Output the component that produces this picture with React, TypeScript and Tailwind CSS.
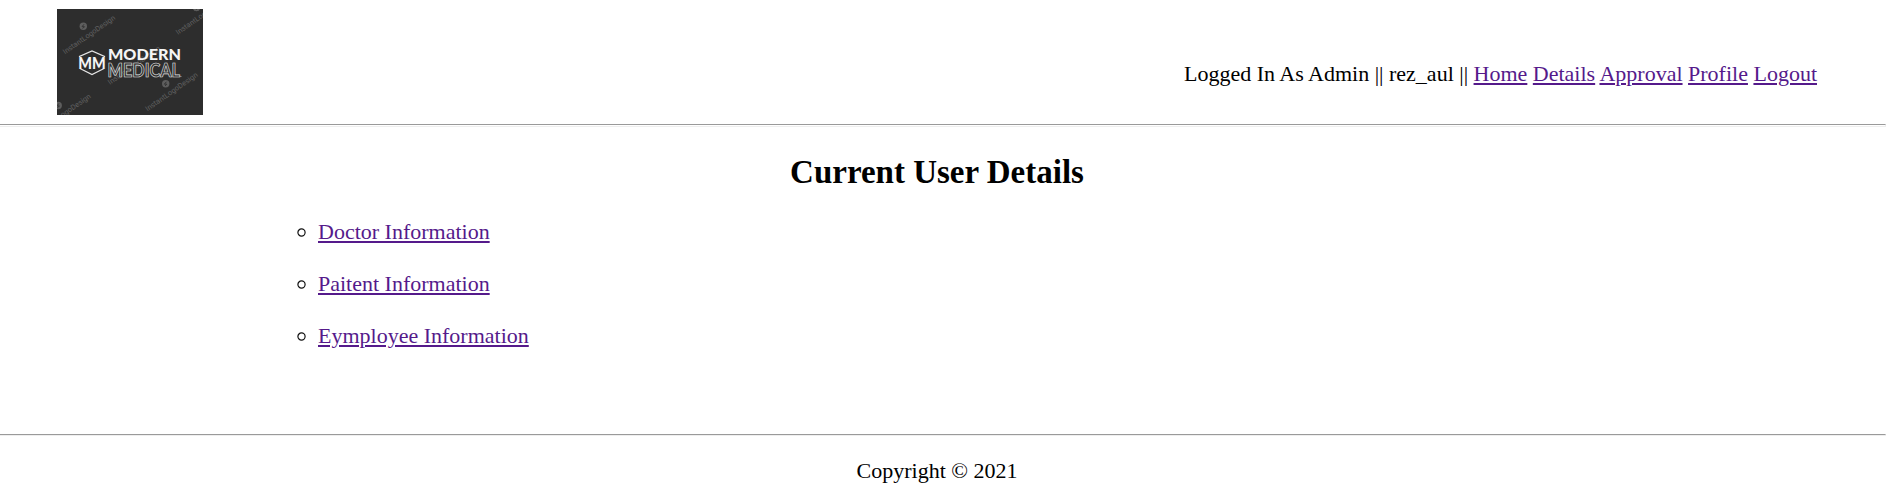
const link = "text-[#551a8b] underline underline-offset-[2px] decoration-2";

function Mark({ x, y }: { x: number; y: number }) {
  return (
    <g transform={`translate(${x} ${y})`}>
      <circle r="3.7" fill="#5e5e5e" />
      <path d="M.7-2-1.3.4H1.2L-.6 2.2" fill="none" stroke="#333" strokeWidth="1" />
    </g>
  );
}

function Watermark({ x, y }: { x: number; y: number }) {
  return (
    <text transform={`translate(${x} ${y}) rotate(-35)`} fontSize="7.4" fontFamily="Roboto, sans-serif" textLength="62" fill="#606060">
      InstantLogoDesign
    </text>
  );
}

function Logo() {
  return (
    <svg width="146" height="106" viewBox="0 0 146 106" className="block shrink-0" fontFamily="Lato, sans-serif">
      <rect width="146" height="106" fill="#2d2d2d" />
      <Watermark x={8} y={45.5} />
      <Watermark x={121} y={26} />
      <Watermark x={53} y={76} />
      <Watermark x={90.5} y={102.5} />
      <Watermark x={-16.500} y={124} />
      <Mark x={26.300} y={17.300} />
      <Mark x={139.500} y={-1.500} />
      <Mark x={108.700} y={74.800} />
      <Mark x={1.200} y={96.500} />
      <path d="M22.500 48V47.500L35 42 47.500 47.500V48M23 59.500 35 65.500 47 59.500" fill="none" stroke="#e6e6e6" strokeWidth="1.200" />
      <text x="21.300" y="59.700" fontSize="16.600" fontWeight="900" textLength="27.400" lengthAdjust="spacingAndGlyphs" fill="#f5f5f5">
        MM
      </text>
      <text x="51" y="51.300" fontSize="15.700" fontWeight="900" textLength="73" lengthAdjust="spacingAndGlyphs" fill="#f5f5f5">
        MODERN
      </text>
      <text x="50.500" y="67.700" fontSize="18.600" fontWeight="700" textLength="72.500" lengthAdjust="spacingAndGlyphs" fill="#2d2d2d" stroke="#e2e2e2" strokeWidth="0.700">
        MEDICAL
      </text>
      <path d="M123 67.500h1.500" stroke="#888" />
    </svg>
  );
}

const ruleColors = "w-[1886px] border-t border-r border-b border-t-[#9a9a9a] border-r-[#eee] border-b-[#eee]";

const nav = ["Home", "Details", "Approval", "Profile", "Logout"];
const records = ["Doctor Information", "Paitent Information", "Eymployee Information"];

export default function App() {
  return (
    <div className="h-[498px] overflow-hidden bg-white font-['Liberation_Serif',serif] text-[22px] leading-[25px] text-black">
      <header className="flex h-[124px] w-[1817px] items-start justify-between pt-[9px] pl-[57px]">
        <Logo />
        <nav className="pt-[52px] whitespace-nowrap">
          Logged In As Admin || rez_aul ||
          {nav.map((item) => (
            <span key={item}>
              {" "}
              <a href="#" className={link}>{item}</a>
            </span>
          ))}
        </nav>
      </header>
      <div className={`h-[3px] ${ruleColors}`} />
      <main className="h-[307px] w-[1874px] pt-[26px]">
        <h2 className="text-center text-[33px] leading-[38px] font-bold">Current User Details</h2>
        <ul className="flex flex-col gap-[27px] pt-[28px] pl-[297px]">
          {records.map((item) => (
            <li key={item} className="flex items-center">
              <svg width="9" height="9" viewBox="0 0 9 9" className="mt-[2px] mr-[12px]">
                <circle cx="4.500" cy="4.500" r="3.600" fill="none" stroke="#111" strokeWidth="1.200" />
              </svg>
              <a href="#" className={link}>{item}</a>
            </li>
          ))}
        </ul>
      </main>
      <div className={`h-[2px] ${ruleColors}`} />
      <footer className="w-[1874px] pt-[22px] text-center">Copyright © 2021</footer>
    </div>
  );
}
